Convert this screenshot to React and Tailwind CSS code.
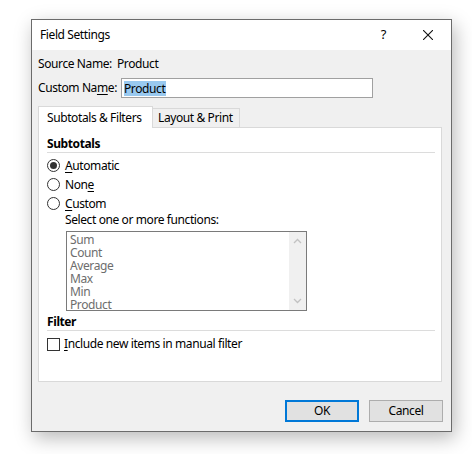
import React from 'react';

const FONT = { fontFamily: '"Noto Sans", "Open Sans", sans-serif' };

// mnemonic letter underline, like Win32 dialogs
const U = ({ children }) => <span className="underline underline-offset-2 decoration-1">{children}</span>;

const Radio = ({ checked, children }) => (
    <div className="flex items-center h-[19px]">
        <div className="w-[13px] h-[13px] rounded-full border border-[#333] bg-white flex items-center justify-center shrink-0">
            {checked && <div className="w-[7px] h-[7px] rounded-full bg-[#333]" />}
        </div>
        <span className="ml-[5px]">{children}</span>
    </div>
);

const Heading = ({ children }) => (
    <div className="h-[17px] flex items-center font-bold border-b border-[#dcdcdc] mr-[6px]">{children}</div>
);

export default function App() {
    const functions = ['Sum', 'Count', 'Average', 'Max', 'Min', 'Product'];

    return (
        <div className="w-[472px] h-[454px] bg-white text-[12px] text-black whitespace-nowrap tracking-[-0.4px]" style={FONT}>
            <div className="pt-[19px] pl-[31px]">
                <div className="w-[421px] h-[413px] border border-[#6b6b6b] bg-[#f0f0f0] flex flex-col shadow-[3px_6px_18px_rgba(0,0,0,0.28)]">
                    {/* title bar */}
                    <div className="h-[30px] bg-white flex items-center shrink-0">
                        <span className="ml-[8px] text-[12px]">Field Settings</span>
                        <span className="ml-auto mr-[37px] text-[13px]">?</span>
                        <svg width="10" height="10" viewBox="0 0 10 10" className="mr-[18px]">
                            <path d="M0 0 L10 10 M10 0 L0 10" stroke="#111" strokeWidth="1.1" />
                        </svg>
                    </div>

                    <div className="flex flex-col pl-[6px] pr-[9px] flex-1">
                        <div className="h-[28px] flex items-center">
                            <span className="w-[79px]">Source Name:</span>
                            <span>Product</span>
                        </div>
                        <div className="h-[20px] flex items-center">
                            <span className="w-[83px]">Custom Na<U>m</U>e:</span>
                            <div className="w-[252px] h-[20px] border border-[#a0a0a0] bg-white flex items-center pl-[2px]">
                                <span className="bg-[#99c9ef] leading-[15px] pr-[1px]">Product</span>
                            </div>
                        </div>

                        {/* tabs */}
                        <div className="flex items-end mt-[8px] h-[21px] relative z-10">
                            <div className="w-[115px] h-[22px] bg-white border border-b-0 border-[#d9d9d9] flex items-center pl-[8px] -mb-[1px]">
                                Subtotals &amp; Filters
                            </div>
                            <div className="w-[87px] h-[19px] bg-[#f0f0f0] border border-l-0 border-b-0 border-[#d9d9d9] flex items-center pl-[5px]">
                                Layout &amp; Print
                            </div>
                        </div>

                        {/* tab panel */}
                        <div className="h-[255px] bg-white border border-[#d9d9d9] pl-[8px] flex flex-col">
                            <div className="mt-[8px]"><Heading>Subtotals</Heading></div>
                            <div className="mt-[3px]">
                                <Radio checked><U>A</U>utomatic</Radio>
                                <Radio>Non<U>e</U></Radio>
                                <Radio><U>C</U>ustom</Radio>
                            </div>
                            <div className="h-[14px] flex items-center pl-[18px]">Select one or more functions:</div>
                            <div className="ml-[19px] mt-[4px] w-[241px] h-[80px] border border-[#7a7a7a] flex">
                                <div className="flex-1 pl-[3px] pt-[1px] text-[#6d6d6d] leading-[13px]">
                                    {functions.map((f) => <div key={f}>{f}</div>)}
                                </div>
                                <div className="w-[17px] bg-[#f0f0f0] flex flex-col items-center justify-between py-[6px]">
                                    <svg width="9" height="6" viewBox="0 0 9 6"><path d="M1 5 L4.5 1.5 L8 5" fill="none" stroke="#c2c2c2" strokeWidth="1.3" /></svg>
                                    <svg width="9" height="6" viewBox="0 0 9 6"><path d="M1 1 L4.5 4.5 L8 1" fill="none" stroke="#c2c2c2" strokeWidth="1.3" /></svg>
                                </div>
                            </div>
                            <div className="mt-[3px]"><Heading>Filter</Heading></div>
                            <div className="mt-[5px] h-[16px] flex items-center">
                                <div className="w-[13px] h-[13px] border border-[#333] bg-white shrink-0" />
                                <span className="ml-[4px]"><U>I</U>nclude new items in manual filter</span>
                            </div>
                        </div>

                        {/* buttons */}
                        <div className="flex justify-end gap-[10px] mt-[18px] mr-[-1px]">
                            <button className="w-[74px] h-[22px] bg-[#e1e1e1] border-2 border-[#0078d7] flex items-center justify-center">OK</button>
                            <button className="w-[74px] h-[22px] bg-[#e1e1e1] border border-[#adadad] flex items-center justify-center">Cancel</button>
                        </div>
                    </div>
                </div>
            </div>
        </div>
    );
}
